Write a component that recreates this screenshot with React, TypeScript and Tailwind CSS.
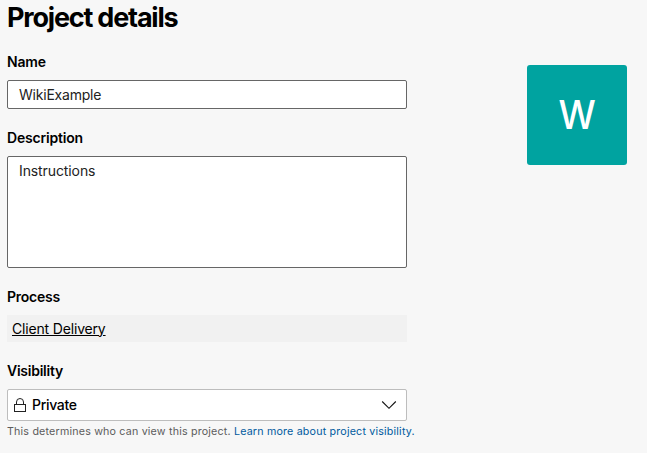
import type { ReactNode } from "react";

function Label({ children, spacing }: { children: ReactNode; spacing: string }) {
  return (
    <div className={`h-5 text-[14px] leading-5 font-semibold whitespace-nowrap ${spacing}`}>
      <span>{children}</span>
    </div>
  );
}

function LockIcon() {
  return (
    <svg width="12" height="14" viewBox="0 0 12 14" fill="none" stroke="#222" strokeWidth="1">
      <rect x="0.5" y="6.5" width="11" height="7" />
      <path d="M2.5 6.5V4a3.5 3.5 0 0 1 7 0v2.5" />
    </svg>
  );
}

function ChevronIcon() {
  return (
    <svg width="16" height="10" viewBox="0 0 16 10" fill="none" stroke="#111" strokeWidth="1.1">
      <path d="M1.2 1.5 8 8.3l6.8-6.8" />
    </svg>
  );
}

export default function App() {
  return (
    <main className="flex h-[453px] w-[647px] items-start overflow-hidden bg-[#f7f7f7] pl-[7px] font-['Inter','Liberation_Sans',sans-serif] text-black">
      <section className="flex w-[400px] flex-col">
        <h1 className="mt-0.5 h-8 text-[27px] leading-8 font-bold tracking-[-1.2px] whitespace-nowrap">Project details</h1>
        <div className="mt-[18px] flex flex-col">
          <Label spacing="tracking-[-0.2px]">Name</Label>
          <div className="mt-2 flex h-[29px] items-center rounded-[2px] border border-[#666] bg-white pl-[11px] text-[14px] leading-5 tracking-[-0.22px] text-[#222]">
            <span>WikiExample</span>
          </div>
        </div>
        <div className="mt-[19px] flex flex-col">
          <Label spacing="tracking-[-0.2px]">Description</Label>
          <div className="mt-2 h-[112px] rounded-[2px] border border-[#666] bg-white pt-1 pl-[11px] text-[14px] leading-5 tracking-[-0.1px] text-[#222]">
            <span>Instructions</span>
          </div>
        </div>
        <div className="mt-[19px] flex flex-col">
          <Label spacing="tracking-[-0.25px]">Process</Label>
          <div className="mt-2 flex h-[27px] items-center bg-[#f1f1f1] pl-[5px] text-[14px] leading-5 tracking-[-0.17px]">
            <a className="underline">Client Delivery</a>
          </div>
        </div>
        <div className="mt-[19px] flex flex-col">
          <Label spacing="tracking-[-0.25px]">Visibility</Label>
          <div className="mt-2 flex h-8 items-center rounded-[2px] border border-[#bdbdbd] bg-white pr-[9px] pl-1.5 text-[14px] leading-5">
            <LockIcon />
            <span className="ml-1.5 font-medium tracking-[-0.3px]">Private</span>
            <span className="ml-auto"><ChevronIcon /></span>
          </div>
          <p className="mt-[3px] text-[10.7px] leading-4 tracking-[0.185px] whitespace-nowrap text-[#5c5c5c]">
            <span>This determines who can view this project.</span>{" "}
            <a className="text-[#005a9e]">Learn more about project visibility.</a>
          </p>
        </div>
      </section>
      <div className="mt-[65px] ml-[120px] flex size-[100px] items-center justify-center rounded-[3px] bg-[#00a3a0] text-[40px] leading-none text-white">
        <span className="scale-x-[0.93] font-medium">W</span>
      </div>
    </main>
  );
}
